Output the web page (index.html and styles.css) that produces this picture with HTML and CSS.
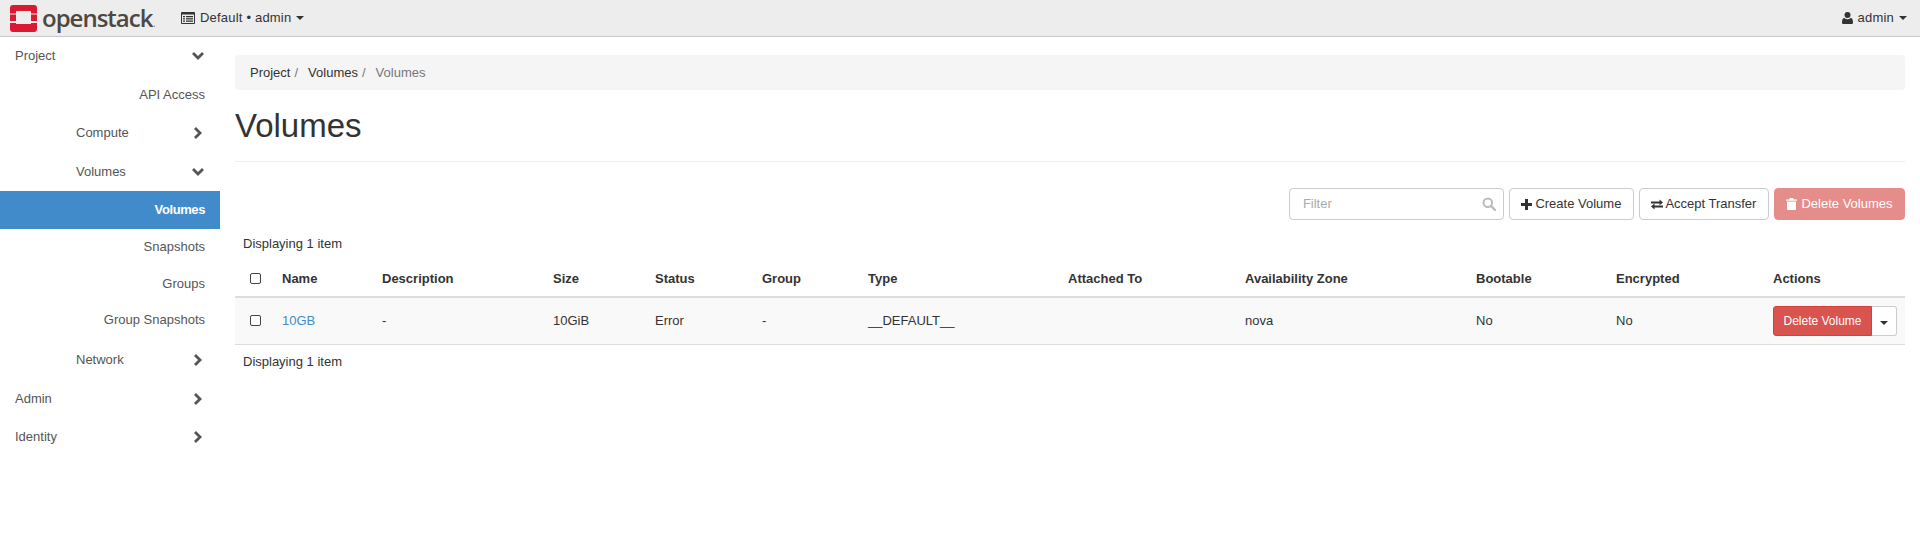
FILE: index.html
```html
<!DOCTYPE html>
<html lang="en">
<head>
    <meta charset="UTF-8">
    <meta name="viewport" content="width=device-width, initial-scale=1.0">
    <title>Volumes</title>
    <link rel="stylesheet" href="styles.css">
</head>
<body>
    <header class="topbar">
        <a class="brand">
            <svg class="logo" viewBox="0 0 27 27" width="27" height="27">
                <path fill="#da1a32" d="M3 0h21a3 3 0 0 1 3 3v5.500h-6V6H6v2.500H0V3a3 3 0 0 1 3-3zM0 18h6v1h15v-1h6v6a3 3 0 0 1-3 3H3a3 3 0 0 1-3-3zM0 9.500h6V16H0zM21 9.500h6V16h-6z"/>
            </svg>
            <span class="brand-name">openstack</span><span class="brand-dot">.</span>
        </a>
        <div class="project-menu">
            <svg class="icon" viewBox="0 0 14 12" width="14" height="12">
                <path fill="#333" d="M1 0h12a1 1 0 0 1 1 1v10a1 1 0 0 1-1 1H1a1 1 0 0 1-1-1V1a1 1 0 0 1 1-1zm0 2.500V11h12V2.500zM2 4h2v1.300H2zm3 0h7v1.300H5zM2 6.200h2v1.300H2zm3 0h7v1.300H5zM2 8.400h2v1.300H2zm3 0h7v1.300H5z"/>
            </svg>
            <span>Default • admin</span>
            <span class="caret"></span>
        </div>
        <div class="user-menu">
            <svg class="icon" viewBox="0 0 11 12" width="11" height="12">
                <circle cx="5.500" cy="3" r="3" fill="#333"/>
                <path fill="#333" d="M0 10.500C0 8 .8 6 2.300 6c1 .8 2 1.200 3.200 1.200S7.700 6.800 8.700 6C10.200 6 11 8 11 10.500c0 1-.7 1.500-1.500 1.500h-8C.7 12 0 11.500 0 10.500z"/>
            </svg>
            <span>admin</span>
            <span class="caret"></span>
        </div>
    </header>

    <div class="page">
        <nav class="sidebar">
            <div class="nav-row level-1 open"><span>Project</span><svg class="chev" viewBox="0 0 14 14"><polyline points="2,4 7,9 12,4"/></svg></div>
            <div class="nav-leaf tall">API Access</div>
            <div class="nav-row level-2"><span>Compute</span><svg class="chev" viewBox="0 0 14 14"><polyline points="4,2 9,7 4,12"/></svg></div>
            <div class="nav-row level-2 open"><span>Volumes</span><svg class="chev" viewBox="0 0 14 14"><polyline points="2,4 7,9 12,4"/></svg></div>
            <div class="nav-leaf active">Volumes</div>
            <div class="nav-leaf">Snapshots</div>
            <div class="nav-leaf">Groups</div>
            <div class="nav-leaf last">Group Snapshots</div>
            <div class="nav-row level-2"><span>Network</span><svg class="chev" viewBox="0 0 14 14"><polyline points="4,2 9,7 4,12"/></svg></div>
            <div class="nav-row level-1"><span>Admin</span><svg class="chev" viewBox="0 0 14 14"><polyline points="4,2 9,7 4,12"/></svg></div>
            <div class="nav-row level-1"><span>Identity</span><svg class="chev" viewBox="0 0 14 14"><polyline points="4,2 9,7 4,12"/></svg></div>
        </nav>

        <main class="content">
            <ol class="breadcrumb">
                <li>Project</li>
                <li>Volumes</li>
                <li class="current">Volumes</li>
            </ol>
            <h1 class="page-title">Volumes</h1>

            <div class="actions">
                <div class="filter">
                    <span class="placeholder">Filter</span>
                    <svg viewBox="0 0 14 14" width="14" height="14"><circle cx="5.800" cy="5.800" r="4.300" fill="none" stroke="#bbb" stroke-width="2"/><line x1="9" y1="9" x2="13" y2="13" stroke="#bbb" stroke-width="2.400" stroke-linecap="round"/></svg>
                </div>
                <button class="btn">
                    <svg viewBox="0 0 11 11" width="11" height="11"><path fill="#333" d="M4 0h3v4h4v3H7v4H4V7H0V4h4z"/></svg>
                    Create Volume
                </button>
                <button class="btn btn-tight">
                    <svg viewBox="0 0 12 11" width="12" height="11"><path fill="#333" d="M0 2.500h8.500V.500L12 3.500 8.500 6.300V4.500H0zM12 6.500H3.500v-2L0 7.500l3.500 3V8.500H12z"/></svg>
                    Accept Transfer
                </button>
                <button class="btn btn-danger disabled">
                    <svg viewBox="0 0 11 12" width="11" height="12"><path fill="#fff" d="M4 0h3l1 1.500h3v1.200H0V1.500h3zM1 3.500h9V11a1 1 0 0 1-1 1H2a1 1 0 0 1-1-1z"/></svg>
                    Delete Volumes
                </button>
            </div>

            <p class="count">Displaying 1 item</p>
            <table class="volumes">
                <thead>
                    <tr>
                        <th class="col-check"><span class="check"></span></th>
                        <th class="col-name">Name</th>
                        <th class="col-desc">Description</th>
                        <th class="col-size">Size</th>
                        <th class="col-status">Status</th>
                        <th class="col-group">Group</th>
                        <th class="col-type">Type</th>
                        <th class="col-attached">Attached To</th>
                        <th class="col-zone">Availability Zone</th>
                        <th class="col-boot">Bootable</th>
                        <th class="col-enc">Encrypted</th>
                        <th>Actions</th>
                    </tr>
                </thead>
                <tbody>
                    <tr>
                        <td><span class="check"></span></td>
                        <td><a class="link">10GB</a></td>
                        <td>-</td>
                        <td>10GiB</td>
                        <td>Error</td>
                        <td>-</td>
                        <td>__DEFAULT__</td>
                        <td></td>
                        <td>nova</td>
                        <td>No</td>
                        <td>No</td>
                        <td>
                            <div class="btn-group">
                                <button class="btn-small danger">Delete Volume</button>
                                <button class="btn-small toggle"><span class="caret"></span></button>
                            </div>
                        </td>
                    </tr>
                </tbody>
            </table>
            <p class="count bottom">Displaying 1 item</p>
        </main>
    </div>
</body>
</html>
```

FILE: styles.css
```css
/* General Styles */
* {
    box-sizing: border-box;
}

body {
    margin: 0;
    font-family: "Liberation Sans", Arial, sans-serif;
    font-size: 13px;
    line-height: 18px;
    color: #333;
    background-color: #fff;
}

.caret {
    display: inline-block;
    width: 0;
    height: 0;
    border-top: 4px solid #333;
    border-left: 4px solid transparent;
    border-right: 4px solid transparent;
}

/* Top bar */
.topbar {
    display: flex;
    align-items: center;
    height: 37px;
    padding: 0 13px 0 10px;
    background-color: #ededed;
    border-bottom: 1px solid #c8c8c8;
}

.brand {
    display: flex;
    align-items: center;
    width: 171px;
}

.logo {
    flex: none;
    margin-right: 5px;
}

.brand-name {
    font-family: "Open Sans", sans-serif;
    font-size: 24px;
    font-weight: 600;
    line-height: 30px;
    letter-spacing: -1px;
    color: #4e4742;
}

.brand-dot {
    font-size: 12px;
    color: #888;
    margin-top: 10px;
}

.project-menu, .user-menu {
    display: flex;
    align-items: center;
    gap: 5px;
    letter-spacing: 0.2px;
}

.user-menu {
    margin-left: auto;
}

/* Sidebar */
.page {
    display: flex;
    align-items: flex-start;
}

.sidebar {
    flex: none;
    width: 220px;
    color: #555;
}

.nav-row {
    display: flex;
    align-items: center;
    height: 38.500px;
    padding-right: 15px;
}

.nav-row span {
    flex: 1;
}

.level-1 {
    padding-left: 15px;
}

.level-2 {
    padding-left: 76px;
}

.chev {
    width: 14px;
    height: 14px;
    fill: none;
    stroke: #555;
    stroke-width: 2.800;
}

.nav-leaf {
    height: 36.700px;
    line-height: 36.700px;
    padding-right: 15px;
    text-align: right;
}

.nav-leaf.tall {
    height: 38.500px;
    line-height: 38.500px;
}

.nav-leaf.last {
    margin-bottom: 1.800px;
}

.nav-leaf.active {
    height: 38px;
    line-height: 38px;
    font-weight: bold;
    letter-spacing: -0.4px;
    color: #fff;
    background-color: #428bca;
}

/* Main content */
.content {
    flex: 1;
    min-width: 0;
    padding: 18px 15px 0;
}

.breadcrumb {
    display: flex;
    align-items: center;
    height: 35px;
    margin: 0;
    padding: 0 15px;
    list-style: none;
    background-color: #f5f5f5;
    border-radius: 4px;
}

.breadcrumb li + li::before {
    content: "/";
    padding: 0 10px 0 4px;
    color: #777;
}

.breadcrumb .current {
    color: #777;
}

.page-title {
    margin: 18px 0 0;
    padding-bottom: 17px;
    font-size: 33px;
    font-weight: 400;
    line-height: 36px;
    border-bottom: 1px solid #eee;
}

.actions {
    display: flex;
    justify-content: flex-end;
    gap: 5px;
    margin-top: 26px;
}

.filter {
    display: flex;
    align-items: center;
    justify-content: space-between;
    width: 215px;
    height: 32px;
    padding: 0 7px 0 13px;
    border: 1px solid #ccc;
    border-radius: 4px;
}

.placeholder {
    color: #aaa;
}

.btn {
    display: flex;
    align-items: center;
    gap: 3px;
    height: 32px;
    padding: 0 11.500px;
    font: inherit;
    color: #333;
    background-color: #fff;
    border: 1px solid #ccc;
    border-radius: 4px;
}

.btn-tight {
    gap: 2px;
}

.btn-danger.disabled {
    gap: 4px;
    color: #fff;
    background-color: #e58d8a;
    border-color: #e58d8a;
}

.count {
    margin: 15px 0 0 8px;
}

.count.bottom {
    margin-top: 8px;
}

/* Table */
.volumes {
    width: 100%;
    margin-top: 8px;
    border-collapse: collapse;
    table-layout: fixed;
}

.volumes th {
    height: 36px;
    padding: 0 8px;
    text-align: left;
    border-bottom: 2px solid #ddd;
}

.volumes td {
    height: 47px;
    padding: 0 8px;
    background-color: #f9f9f9;
    border-bottom: 1px solid #ddd;
}

.col-check { width: 39px; }
.col-name { width: 100px; }
.col-desc { width: 171px; }
.col-size { width: 102px; }
.col-status { width: 107px; }
.col-group { width: 106px; }
.col-type { width: 200px; }
.col-attached { width: 177px; }
.col-zone { width: 231px; }
.col-boot { width: 140px; }
.col-enc { width: 157px; }

.check {
    display: block;
    width: 11px;
    height: 11px;
    margin-left: 7px;
    background-color: #fff;
    border: 1px solid #444;
    border-radius: 2px;
}

.link {
    color: #428bca;
}

.btn-group {
    display: flex;
}

.btn-small {
    height: 30px;
    font: inherit;
    font-size: 12px;
    border-radius: 3px;
}

.danger {
    width: 99px;
    padding: 0;
    color: #fff;
    background-color: #d9534f;
    border: 1px solid #d43f3a;
    border-radius: 3px 0 0 3px;
}

.toggle {
    width: 25px;
    padding: 0;
    background-color: #fff;
    border: 1px solid #ccc;
    border-left: 0;
    border-radius: 0 3px 3px 0;
}
```
